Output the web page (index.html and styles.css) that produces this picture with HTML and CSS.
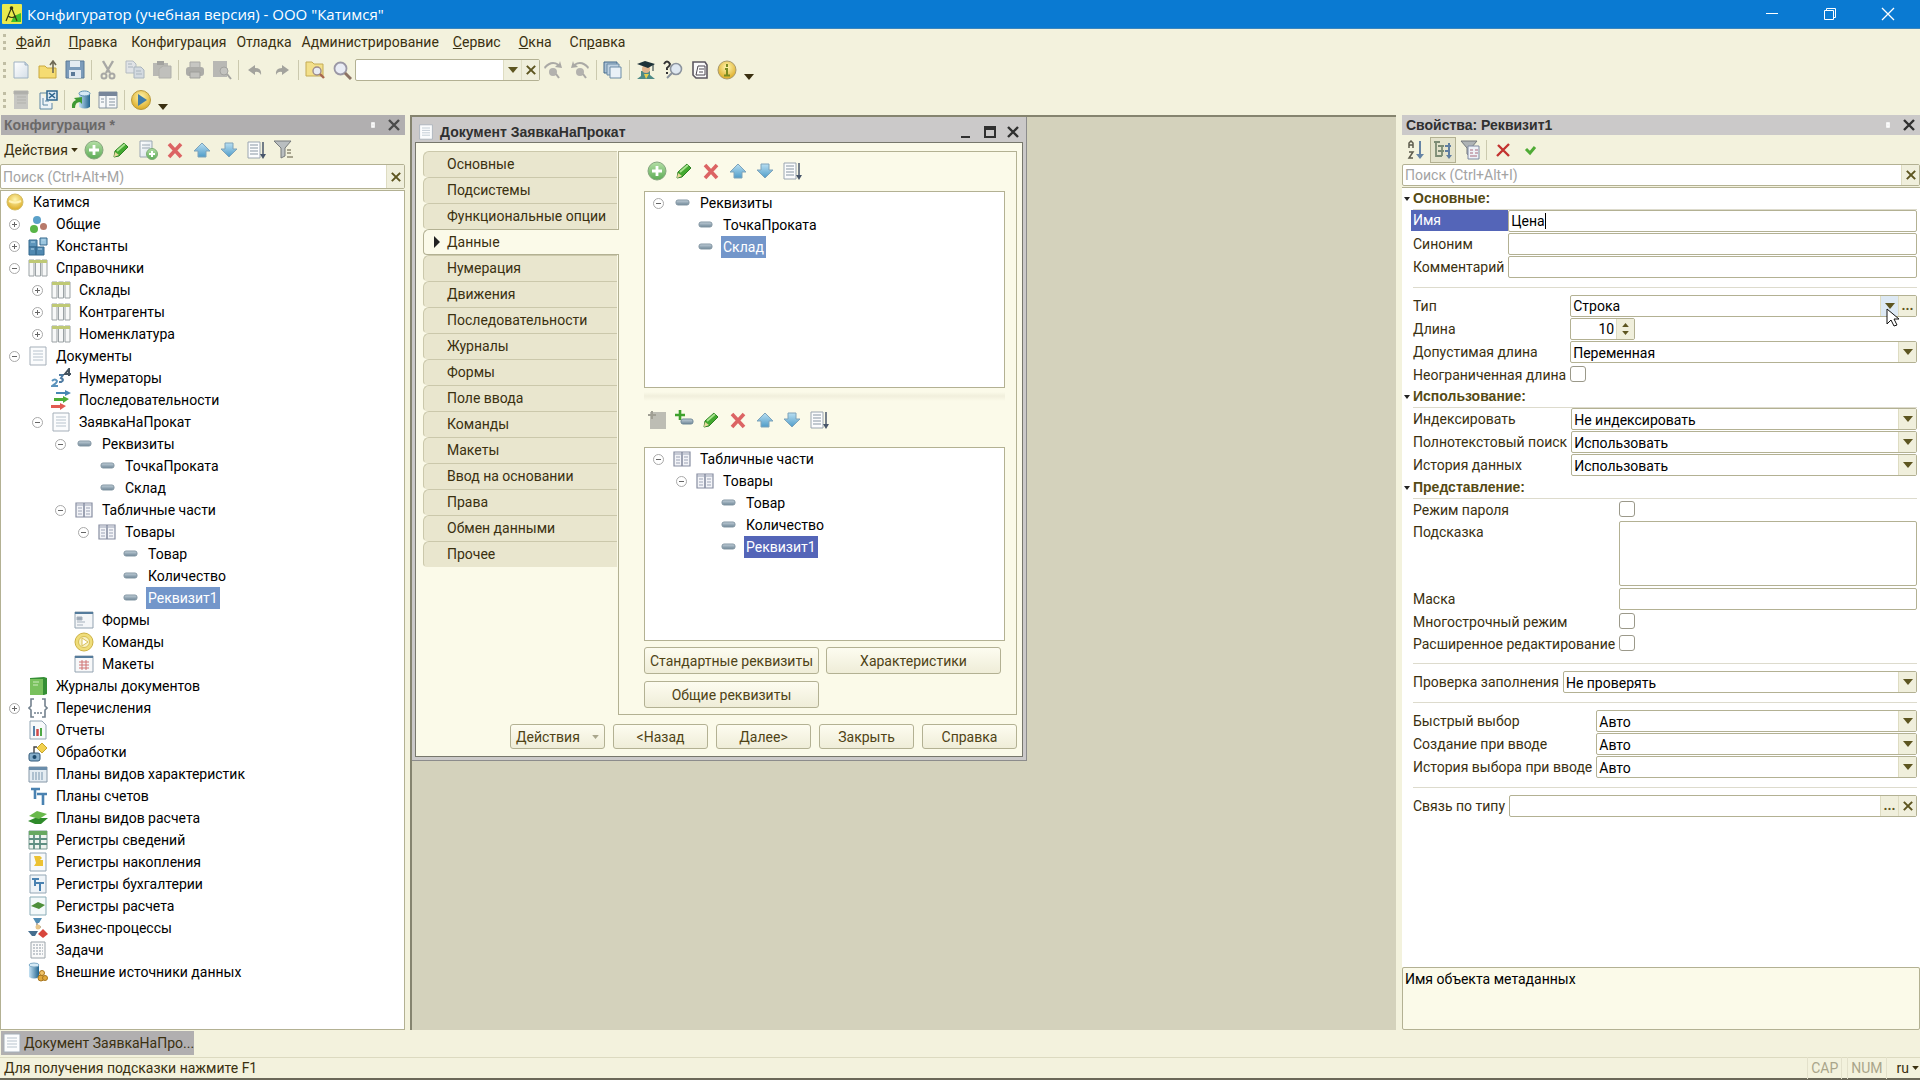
FILE: index.html
```
<!DOCTYPE html>
<html lang="ru">
<head>
    <meta charset="UTF-8">
    <meta name="viewport" content="width=device-width, initial-scale=1.0">
    <title>Конфигуратор (учебная версия) - ООО "Катимся"</title>
    <link rel="stylesheet" href="styles.css">
</head>
<body>
    <!-- Icon set -->
    <svg class="sprite" width="0" height="0" aria-hidden="true">
        <defs>
            <linearGradient id="g-blue" x1="0" y1="0" x2="0" y2="1"><stop offset="0" stop-color="#b9dff2"/><stop offset="1" stop-color="#4f9cc8"/></linearGradient>
            <linearGradient id="g-green" x1="0" y1="0" x2="0" y2="1"><stop offset="0" stop-color="#b4dfa6"/><stop offset="1" stop-color="#5cab55"/></linearGradient>
            <linearGradient id="g-paper" x1="0" y1="0" x2="1" y2="1"><stop offset="0" stop-color="#ffffff"/><stop offset="1" stop-color="#d5dfe8"/></linearGradient>
            <linearGradient id="g-bar" x1="0" y1="0" x2="0" y2="1"><stop offset="0" stop-color="#c3d0da"/><stop offset="1" stop-color="#6f8797"/></linearGradient>
            <linearGradient id="g-cyl" x1="0" y1="0" x2="1" y2="0"><stop offset="0" stop-color="#c5e2f4"/><stop offset="1" stop-color="#22648f"/></linearGradient>
            <radialGradient id="g-gold" cx=".5" cy=".35" r=".65"><stop offset="0" stop-color="#fff6b0"/><stop offset="1" stop-color="#dcaa22"/></radialGradient>
        </defs>
        <symbol id="i-app" viewBox="0 0 20 20"><rect width="20" height="20" rx="1" fill="#e9ea4d"/><path d="M12 12l7-3v9H9z" fill="#3fbf2c"/><path d="M9 5L4 17M10 5l5 12M6 12q4 3 8 0" stroke="#333a12" stroke-width="1.200" fill="none"/><circle cx="9.500" cy="4" r="1.800" fill="#333a12"/></symbol>
        <symbol id="i-new" viewBox="0 0 20 20"><path d="M3 2h11l3 3v13H3z" fill="url(#g-paper)" stroke="#9fb2c2"/><path d="M14 2v3h3" fill="#c5d3de" stroke="#9fb2c2"/></symbol>
        <symbol id="i-open" viewBox="0 0 20 20"><path d="M1 6h6l2 2h9v10H1z" fill="#f5dc72" stroke="#c9a83c"/><path d="M15 13V2M12 5l3-4 3 4" fill="none" stroke="#6e6955" stroke-width="1.600"/></symbol>
        <symbol id="i-save" viewBox="0 0 20 20"><path d="M1 1h18v17H1z" fill="#7c9cba" stroke="#5b7a98"/><path d="M5 1h10v6H5z" fill="#e4ecf2"/><path d="M4 10h12v8H4z" fill="#dfe8ef"/><path d="M6 12h4v4H6z" fill="#5b7a98"/></symbol>
        <symbol id="i-cut" viewBox="0 0 20 20"><path d="M5 1l7 12M15 1L8 13" stroke="#a8a8a5" stroke-width="2.400"/><circle cx="6" cy="16" r="2.500" fill="none" stroke="#a8a8a5" stroke-width="2"/><circle cx="14" cy="16" r="2.500" fill="none" stroke="#a8a8a5" stroke-width="2"/></symbol>
        <symbol id="i-copy" viewBox="0 0 20 20"><path d="M1 1h7l3 3v9H1z" fill="#e0e3e6" stroke="#b4bbc1"/><path d="M9 7h7l3 3v8H9z" fill="#d3dae0" stroke="#a9b4bd"/><path d="M3 4h4M3 7h5M11 11h5M11 14h6" stroke="#a9b4bd"/></symbol>
        <symbol id="i-paste" viewBox="0 0 20 20"><path d="M1 3h15v13H1z" fill="#b9b9b4"/><path d="M5 1h7v4H5z" fill="#a3a39f"/><path d="M7 9l4-3h8v12H7z" fill="#c0c0bc" stroke="#b0b0ab"/></symbol>
        <symbol id="i-print" viewBox="0 0 20 20"><path d="M5 2h10v6H5z" fill="#c6c6c2" stroke="#a8a8a4"/><rect x="1" y="7" width="18" height="9" rx="3" fill="#acaca8"/><path d="M5 12h10v6H5z" fill="#c1c1bd" stroke="#9f9f9b"/></symbol>
        <symbol id="i-preview" viewBox="0 0 20 20"><path d="M1 1h14v16H1z" fill="#b8b8b4"/><circle cx="12" cy="11" r="4" fill="#c3c3bf" stroke="#a3a39f"/><path d="M15 14l4 5" stroke="#a3a39f" stroke-width="2"/></symbol>
        <symbol id="i-undo" viewBox="0 0 20 20"><path d="M3 10l7-5v3q7 0 6 7-2-4-6-3v3z" fill="#a3a39d"/></symbol>
        <symbol id="i-redo" viewBox="0 0 20 20"><path d="M17 10l-7-5v3q-7 0-6 7 2-4 6-3v3z" fill="#a3a39d"/></symbol>
        <symbol id="i-findall" viewBox="0 0 20 20"><path d="M1 2h6l2 2h9v12H1z" fill="#f3e08a" stroke="#c4ab55"/><circle cx="12" cy="11" r="4" fill="#e8ebf2" stroke="#9d8b8b" stroke-width="1.400"/><path d="M15 14l4 4" stroke="#a8674f" stroke-width="2.400"/></symbol>
        <symbol id="i-find" viewBox="0 0 20 20"><circle cx="8.500" cy="8.500" r="6" fill="#e9ecf5" stroke="#9a97a5" stroke-width="1.800"/><path d="M13 13l6 6" stroke="#8c7264" stroke-width="3"/></symbol>
        <symbol id="i-findnext" viewBox="0 0 20 20"><path d="M1 7q7-8 15-3l1-3 2 7-7-1 2-2Q8 2 2 9z" fill="#aaa9a5"/><circle cx="10" cy="12" r="4" fill="#b3b2ae"/><path d="M13 14l3 4" stroke="#aaa9a5" stroke-width="2"/></symbol>
        <symbol id="i-findprev" viewBox="0 0 20 20"><path d="M19 7Q12-1 4 4L3 1 1 8l7-1-2-2q6-3 12 4z" fill="#aaa9a5"/><circle cx="10" cy="12" r="4" fill="#b3b2ae"/><path d="M13 14l3 4" stroke="#aaa9a5" stroke-width="2"/></symbol>
        <symbol id="i-windows" viewBox="0 0 20 20"><path d="M1 2h13v11H1z" fill="#a8bfd2" stroke="#41698b"/><path d="M4 4h12v11H4z" fill="#bfd2e2" stroke="#6b8ba6"/><path d="M7 7h11v11H7z" fill="#e9f1f7" stroke="#6b8ba6"/></symbol>
        <symbol id="i-student" viewBox="0 0 20 20"><path d="M5 11h9v4l5 4H1l4-3z" fill="#4e8a86"/><circle cx="10" cy="9" r="4" fill="#e2b58d"/><path d="M1 4l8-3 10 3-7 4z" fill="#1d3238"/><path d="M17 4v7" stroke="#1d3238"/><path d="M8 14l2 5 3-5z" fill="#e8cf4c"/></symbol>
        <symbol id="i-helpfind" viewBox="0 0 20 20"><path d="M1 4q3-5 6 0 0 2-3 4v2M4 12v2" fill="none" stroke="#333" stroke-width="2"/><circle cx="13" cy="9" r="5.500" fill="#dfe8f1" stroke="#8c949e" stroke-width="1.600"/><path d="M9 13l-5 5" stroke="#8c949e" stroke-width="2"/></symbol>
        <symbol id="i-book" viewBox="0 0 20 20"><path d="M3 2h12l2 3v13H6l-3-3z" fill="#fafafa" stroke="#5c5760" stroke-width="1.600"/><path d="M8 6h7v9H6z" fill="#fff" stroke="#4c4750"/><path d="M9 9h5M9 12h4" stroke="#4c4750"/></symbol>
        <symbol id="i-info" viewBox="0 0 20 20"><circle cx="10" cy="10" r="9" fill="url(#g-gold)" stroke="#a99a6a"/><path d="M10 4v3M8 9h2v6M7 15.500h6" stroke="#7a8a20" stroke-width="2" fill="none"/></symbol>
        <symbol id="i-list" viewBox="0 0 20 20"><path d="M3 1h14v18H3z" fill="#c6c6c2"/><path d="M3 1h14v3H3zM6 7h9M6 10h9M6 13h9" stroke="#b2b2ad" fill="#afafab"/></symbol>
        <symbol id="i-closeconf" viewBox="0 0 20 20"><path d="M2 3h7M2 3v16h12v-6" fill="#eef3f6" stroke="#5d86a3"/><path d="M9 1h10v9H9z" fill="#ddebf4" stroke="#2c648d" stroke-width="1.500"/><path d="M11 3l6 5M17 3l-6 5" stroke="#2c648d" stroke-width="1.600"/><path d="M5 8v7h5M7 11h4" stroke="#5d86a3" fill="none"/></symbol>
        <symbol id="i-dbupdate" viewBox="0 0 20 20"><path d="M8 3v14q6 3 11 0V3z" fill="url(#g-cyl)"/><ellipse cx="13.500" cy="3.500" rx="5.500" ry="2.500" fill="#d5e9f5" stroke="#5c91b4"/><path d="M1 18Q0 12 5 10L3 8l8-1v7l-2-2q-5 0-5 6z" fill="#3f9a34"/></symbol>
        <symbol id="i-table" viewBox="0 0 20 20"><path d="M1 2h18v16H1z" fill="#f6f8f9" stroke="#8593a0"/><path d="M1 2h18v4H1z" fill="#77869a"/><path d="M8 6v12M11 9h6M11 12h6M11 15h6M3 9h3M3 12h3" stroke="#8593a0"/></symbol>
        <symbol id="i-run" viewBox="0 0 20 20"><circle cx="10" cy="10" r="9.500" fill="url(#g-gold)" stroke="#b99a3d"/><path d="M7 4l9 6-9 6z" fill="#3f7ca9"/></symbol>
        <symbol id="i-add" viewBox="0 0 20 20"><circle cx="10" cy="10" r="9" fill="url(#g-green)" stroke="#86a57e"/><path d="M10 5v10M5 10h10" stroke="#fff" stroke-width="2.800"/></symbol>
        <symbol id="i-edit" viewBox="0 0 20 20"><path d="M4 11l9-8 4 4-9 9-5 1z" fill="#43a930" stroke="#2d7f24"/><path d="M6 11l8-7" stroke="#a8e38e" stroke-width="1.800"/><path d="M3 17l1-5 4 3z" fill="#ecd7a0"/></symbol>
        <symbol id="i-addcopy" viewBox="0 0 20 20"><path d="M2 1h12v16H2z" fill="url(#g-paper)" stroke="#9aa7b2"/><path d="M4 5h8M4 8h8" stroke="#9aa7b2"/><circle cx="14" cy="14" r="5.500" fill="url(#g-green)" stroke="#7fae77"/><path d="M14 11v6M11 14h6" stroke="#fff" stroke-width="2"/></symbol>
        <symbol id="i-del" viewBox="0 0 20 20"><path d="M4 4l12 13M16 4L4 17" stroke="#dc6464" stroke-width="3.600"/></symbol>
        <symbol id="i-up" viewBox="0 0 20 20"><path d="M10 3l8 8h-4v6H6v-6H2z" fill="url(#g-blue)" stroke="#7ea3ba"/></symbol>
        <symbol id="i-down" viewBox="0 0 20 20"><path d="M10 17l8-8h-4V3H6v6H2z" fill="url(#g-blue)" stroke="#7ea3ba"/></symbol>
        <symbol id="i-sort" viewBox="0 0 20 20"><path d="M2 2h12v16H2z" fill="#fbfcfd" stroke="#9aa5b0"/><path d="M4 5h8M4 8h8M4 11h8M4 14h8" stroke="#8795a2"/><path d="M17 2v14" stroke="#48566a" stroke-width="1.500"/><path d="M14 14h6l-3 5z" fill="#48566a"/></symbol>
        <symbol id="i-filter" viewBox="0 0 20 20"><path d="M1 1h17l-6 7v8l-4 2V8z" fill="#b9bec0" stroke="#767b7d"/><path d="M14 10h4M14 13h4M14 17h6" stroke="#8f8a74" stroke-width="1.500"/></symbol>
        <symbol id="i-addtab" viewBox="0 0 20 20"><path d="M3 2h16v17H3z" fill="#bdbdb4"/><path d="M5 1v8M1 5h8" stroke="#a09f94" stroke-width="2"/></symbol>
        <symbol id="i-addattr" viewBox="0 0 20 20"><path d="M6 0v10M1 5h10" stroke="#3ea12c" stroke-width="2.600"/><rect x="7" y="9" width="12" height="5" rx="2" fill="url(#g-bar)" stroke="#718998"/></symbol>

        <symbol id="i-root" viewBox="0 0 20 20"><circle cx="10" cy="10" r="8" fill="url(#g-gold)" stroke="#d3bd66"/><path d="M4 9q6 3 12 0" stroke="#fff3b5" stroke-width="2" fill="none"/></symbol>
        <symbol id="i-common" viewBox="0 0 20 20"><circle cx="9" cy="6" r="4" fill="#5ba1c9"/><circle cx="6" cy="15" r="4" fill="#59b547"/><circle cx="15.500" cy="12.500" r="3.500" fill="#b87a6a"/></symbol>
        <symbol id="i-const" viewBox="0 0 20 20"><path d="M1 4h8v7H1z" fill="#5d95bb" stroke="#34688d"/><path d="M12 2h7v7h-7z" fill="#9cc6df" stroke="#34688d"/><path d="M1 11h7v8H1zM8 11h8v8H8z" fill="#5089b1" stroke="#34688d"/><path d="M3 13h3M10 13h4M3 6h4M14 4h3" stroke="#b5d7ea"/></symbol>
        <symbol id="i-catalog" viewBox="0 0 20 20"><path d="M1 2h5v16H1zM7.500 2h5v16h-5zM14 2h5v16h-5z" fill="#f7f8f8" stroke="#9ba2a5"/><path d="M1 2h18v3H1z" fill="#bfc975"/></symbol>
        <symbol id="i-doc" viewBox="0 0 20 20"><path d="M2 1h16v18H2z" fill="#fbfcfd" stroke="#a5afb9"/><path d="M5 5h10M5 8h10M5 11h10M5 14h10" stroke="#b8c3cd"/></symbol>
        <symbol id="i-numer" viewBox="0 0 20 20"><path d="M1 13q3-3 5 0 0 2-5 5h6" fill="none" stroke="#5b93bd" stroke-width="2"/><path d="M8 7h4l-2 3q4 2 0 4l-2 0" fill="none" stroke="#4f7ba2" stroke-width="2"/><path d="M18 8V1l-4 5h6" fill="none" stroke="#44525e" stroke-width="2"/></symbol>
        <symbol id="i-seq" viewBox="0 0 20 20"><path d="M5 2h9V0l6 3-6 3V4H5z" fill="#4787b3"/><path d="M3 8h9V6l6 3-6 4v-2H3z" fill="#4cad37"/><path d="M0 15h9v-2l6 3-6 4v-2H0z" fill="#e25b52"/></symbol>
        <symbol id="i-attr" viewBox="0 0 20 20"><rect x="4" y="7" width="13" height="5" rx="2" fill="url(#g-bar)" stroke="#8497a4"/></symbol>
        <symbol id="i-tabpart" viewBox="0 0 20 20"><path d="M2 3h16v14H2z" fill="#f3f4f8" stroke="#878ea1" stroke-width="1.200"/><path d="M10 3v14" stroke="#878ea1" stroke-width="1.600"/><path d="M2 5h16M4 8h4M4 11h4M4 14h4M12 8h4M12 11h4M12 14h4" stroke="#9ca3b5"/></symbol>
        <symbol id="i-form" viewBox="0 0 20 20"><path d="M1 2h18v16H1z" fill="#f4f6f8" stroke="#93a3b1"/><path d="M1 2h18v2H1z" fill="#557c9c"/><path d="M3 7h5v3H3zM3 12h8M3 15h6" fill="#9aa7b5" stroke="#a5b0bc"/></symbol>
        <symbol id="i-command" viewBox="0 0 20 20"><circle cx="10" cy="10" r="9" fill="#efdd7a" stroke="#cdb142"/><circle cx="10" cy="10" r="5.500" fill="#f8f1c4" stroke="#d7be55"/><path d="M8 6l6 4-6 4z" fill="#fff" stroke="#d7be55"/></symbol>
        <symbol id="i-template" viewBox="0 0 20 20"><path d="M1 2h18v16H1z" fill="#f7f8f9" stroke="#93a3b1"/><path d="M1 2h18v2H1z" fill="#557c9c"/><path d="M5 8h10M5 11h10M5 14h10M8 6v10M12 6v10" stroke="#cf7575"/></symbol>
        <symbol id="i-journal" viewBox="0 0 20 20"><path d="M2 2l14-1 3 1v16l-3 1H2z" fill="#358f35"/><path d="M2 3h13v16H2z" fill="#79c15d"/><path d="M5 6h6M5 9h5" stroke="#cdebbd"/></symbol>
        <symbol id="i-enum" viewBox="0 0 20 20"><path d="M6 1H3v7l-2 2 2 2v7h3M14 1h3v7l2 2-2 2v7h-3" fill="none" stroke="#73818e" stroke-width="1.600"/><path d="M6 15h2M9 15h2M12 15h2" stroke="#73818e" stroke-width="1.600"/></symbol>
        <symbol id="i-report" viewBox="0 0 20 20"><path d="M2 1h12l4 4v14H2z" fill="#f7f9fa" stroke="#93a6b4"/><path d="M6 6v10" stroke="#5782a8" stroke-width="2"/><path d="M9.500 9v7" stroke="#d24a4a" stroke-width="2.500"/><path d="M13 8v8" stroke="#4ea945" stroke-width="2"/></symbol>
        <symbol id="i-process" viewBox="0 0 20 20"><path d="M14 1l5 5-5 5-5-5z" fill="#f2d14f" stroke="#c7a52c"/><path d="M6 11V5h3" stroke="#444" fill="none" stroke-width="1.400"/><rect x="1" y="11" width="11" height="8" rx="2" fill="#86aecb" stroke="#345b7a"/><circle cx="6.500" cy="15" r="2" fill="#1d4a6c"/></symbol>
        <symbol id="i-chars" viewBox="0 0 20 20"><path d="M1 3h18v15H1z" fill="#e4ecf2" stroke="#8698a8"/><path d="M1 3h18v3H1z" fill="#6a8dab"/><path d="M5 8v8M8 8v8M11 8v8M14 8v8" stroke="#7895ad"/></symbol>
        <symbol id="i-accounts" viewBox="0 0 20 20"><path d="M3 3h9M7 3v10M9 8h10M15 8v11" stroke="#4a82b1" stroke-width="2.600" fill="none"/></symbol>
        <symbol id="i-calc" viewBox="0 0 20 20"><path d="M0 13l7-3h13l-7 6H7z" fill="#2e8a2a"/><path d="M1 8l8-5 10 3-8 5z" fill="#69b94b"/></symbol>
        <symbol id="i-reginfo" viewBox="0 0 20 20"><path d="M1 1h18v18H1z" fill="#eef4ef" stroke="#7a9a93"/><path d="M1 1h18v4H1z" fill="#67a860"/><path d="M1 9h18M1 14h18M6 5v14M12 5v14" stroke="#5e8f82" stroke-width="1.800"/></symbol>
        <symbol id="i-regacc" viewBox="0 0 20 20"><path d="M2 1h16v18H2z" fill="#f7f9fb" stroke="#93a6b4"/><path d="M6 4h6l2 2-2 2h3v6H6l2-3z" fill="#ecc233"/></symbol>
        <symbol id="i-regbuh" viewBox="0 0 20 20"><path d="M2 1h16v18H2z" fill="#eff4f8" stroke="#93a6b4"/><path d="M4 5h7M7 5v7M8 9h8M12 9v8" stroke="#4a82b1" stroke-width="2" fill="none"/></symbol>
        <symbol id="i-regcalc" viewBox="0 0 20 20"><path d="M2 1h16v18H2z" fill="#f4f9fa" stroke="#8badb8"/><path d="M3 10l7-4 7 3-6 4z" fill="#4e8f3b"/></symbol>
        <symbol id="i-bp" viewBox="0 0 20 20"><path d="M5 0h9l-3 5H8z" fill="#528db4"/><path d="M9 5v4h4" stroke="#555" fill="none"/><circle cx="10" cy="9" r="2.500" fill="#e8c68a"/><path d="M0 13h10l-3 5H4z" fill="#456e8f"/><path d="M15 11l5 5-5 4-5-4z" fill="#d8463c"/></symbol>
        <symbol id="i-task" viewBox="0 0 20 20"><path d="M3 2h14v16H3z" fill="#fafafa" stroke="#9ca4ab"/><path d="M5 5h10M5 8h10M5 11h10M5 14h10" stroke="#8f99a4" stroke-dasharray="2 1"/></symbol>
        <symbol id="i-ext" viewBox="0 0 20 20"><path d="M1 3v12q5 3 10 0V3z" fill="url(#g-cyl)"/><ellipse cx="6" cy="3" rx="5" ry="2" fill="#d5e9f5" stroke="#7faac6"/><circle cx="13" cy="16" r="3" fill="#e0a83c" stroke="#a8751c"/><circle cx="17" cy="16" r="2.500" fill="#e0a83c" stroke="#a8751c"/><circle cx="14" cy="11" r="2.500" fill="#f0c36a" stroke="#a8751c"/></symbol>

        <symbol id="i-az" viewBox="0 0 20 20"><path d="M3 8V3l2-2 2 2v5M3 5h4M3 12h4l-4 6h4" fill="none" stroke="#5e5c4d" stroke-width="1.500"/><path d="M14 1v14" stroke="#6684a5" stroke-width="2"/><path d="M10 14h8l-4 5z" fill="#6684a5"/></symbol>
        <symbol id="i-cat" viewBox="0 0 20 20"><path d="M1 2h6M3 2v14h6M5 6h6M5 11h6M9 6v10" fill="none" stroke="#7b8b74" stroke-width="1.800"/><path d="M12 6h6M12 11h5M16 3v13" stroke="#5f7da0" stroke-width="2"/><path d="M13 15h6l-3 4z" fill="#5f7da0"/></symbol>
        <symbol id="i-propfilter" viewBox="0 0 20 20"><path d="M1 1h16l-6 7v9l-4-3V8z" fill="#aeb3b5" stroke="#74797b"/><path d="M8 6h11v13H8z" fill="#eef1f7" stroke="#7e89a0"/><path d="M10 10h3M15 10h3M10 13h3M15 13h3M10 16h7" stroke="#a8697a"/></symbol>
        <symbol id="i-cancel" viewBox="0 0 20 20"><path d="M5 5l11 11M16 4L4 16" stroke="#c23330" stroke-width="2.400"/></symbol>
        <symbol id="i-ok" viewBox="0 0 20 20"><path d="M6 9l4 4 5-6" stroke="#4fab35" stroke-width="3" fill="none"/></symbol>
        <symbol id="i-x" viewBox="0 0 12 12"><path d="M1 1l10 10M11 1L1 11" stroke="currentColor" stroke-width="2.400"/></symbol>
        <symbol id="i-tri" viewBox="0 0 10 6"><path d="M0 0h10L5 6z" fill="currentColor"/></symbol>
        <symbol id="i-pin" viewBox="0 0 6 8"><path d="M2 2h2v4H2z" fill="none" stroke="#fff" stroke-width="1.600"/></symbol>
    </svg>

    <header class="titlebar">
        <svg class="icon"><use href="#i-app"/></svg>
        <h1>Конфигуратор (учебная версия) - ООО "Катимся"</h1>
        <div class="window-controls">
            <button aria-label="Свернуть"><svg width="14" height="14"><path d="M1 6.500h12" stroke="#fff"/></svg></button>
            <button aria-label="Восстановить"><svg width="14" height="14"><path d="M1.500 3.500h9v9h-9zM3.500 3V1.500h9v9H11" fill="none" stroke="#fff"/></svg></button>
            <button aria-label="Закрыть"><svg width="14" height="14"><path d="M1 1l12 12M13 1L1 13" stroke="#fff" stroke-width="1.300"/></svg></button>
        </div>
    </header>

    <nav class="menubar">
        <span class="grip"></span>
        <a class="menu-item hot" href="#"><u>Ф</u>айл</a>
        <a class="menu-item hot" href="#"><u>П</u>равка</a>
        <a class="menu-item" href="#">Конфигурация</a>
        <a class="menu-item" href="#">Отладка</a>
        <a class="menu-item" href="#">Администрирование</a>
        <a class="menu-item hot" href="#"><u>С</u>ервис</a>
        <a class="menu-item hot" href="#"><u>О</u>кна</a>
        <a class="menu-item hot" href="#">Сп<u>р</u>авка</a>
    </nav>

    <div class="toolbar main-toolbar">
        <span class="grip"></span>
        <button aria-label="Новый"><svg class="icon"><use href="#i-new"/></svg></button>
        <button aria-label="Открыть"><svg class="icon"><use href="#i-open"/></svg></button>
        <button aria-label="Сохранить"><svg class="icon"><use href="#i-save"/></svg></button>
        <span class="sep"></span>
        <button aria-label="Вырезать"><svg class="icon"><use href="#i-cut"/></svg></button>
        <button aria-label="Копировать"><svg class="icon"><use href="#i-copy"/></svg></button>
        <button aria-label="Вставить"><svg class="icon"><use href="#i-paste"/></svg></button>
        <span class="sep"></span>
        <button aria-label="Печать"><svg class="icon"><use href="#i-print"/></svg></button>
        <button aria-label="Просмотр"><svg class="icon"><use href="#i-preview"/></svg></button>
        <span class="sep"></span>
        <button aria-label="Отменить"><svg class="icon"><use href="#i-undo"/></svg></button>
        <button aria-label="Повторить"><svg class="icon"><use href="#i-redo"/></svg></button>
        <span class="sep"></span>
        <button aria-label="Глобальный поиск"><svg class="icon"><use href="#i-findall"/></svg></button>
        <button aria-label="Найти"><svg class="icon"><use href="#i-find"/></svg></button>
        <div class="field find-box">
            <input type="text" aria-label="Строка поиска">
            <button class="drop" aria-label="Список"><svg class="tri"><use href="#i-tri"/></svg></button>
            <button class="drop" aria-label="Очистить"><svg class="x"><use href="#i-x"/></svg></button>
        </div>
        <button aria-label="Найти далее"><svg class="icon"><use href="#i-findnext"/></svg></button>
        <button aria-label="Найти ранее"><svg class="icon"><use href="#i-findprev"/></svg></button>
        <span class="sep"></span>
        <button aria-label="Окна"><svg class="icon"><use href="#i-windows"/></svg></button>
        <span class="sep"></span>
        <button aria-label="Синтакс-помощник"><svg class="icon"><use href="#i-student"/></svg></button>
        <button aria-label="Поиск в справке"><svg class="icon"><use href="#i-helpfind"/></svg></button>
        <button aria-label="Содержание"><svg class="icon"><use href="#i-book"/></svg></button>
        <button aria-label="О программе"><svg class="icon"><use href="#i-info"/></svg></button>
        <button class="more" aria-label="Ещё"><svg class="tri"><use href="#i-tri"/></svg></button>
    </div>

    <div class="toolbar main-toolbar">
        <span class="grip"></span>
        <button aria-label="Открыть конфигурацию"><svg class="icon"><use href="#i-list"/></svg></button>
        <button aria-label="Закрыть конфигурацию"><svg class="icon"><use href="#i-closeconf"/></svg></button>
        <span class="sep"></span>
        <button aria-label="Обновить базу данных"><svg class="icon"><use href="#i-dbupdate"/></svg></button>
        <button aria-label="Окно конфигурации"><svg class="icon"><use href="#i-table"/></svg></button>
        <span class="sep"></span>
        <button aria-label="Отладка"><svg class="icon"><use href="#i-run"/></svg></button>
        <button class="more" aria-label="Ещё"><svg class="tri"><use href="#i-tri"/></svg></button>
    </div>

    <main class="workspace">
        <!-- Configuration tree -->
        <section class="panel">
            <div class="panel-title inactive">
                <h2>Конфигурация *</h2>
                <svg class="pin"><use href="#i-pin"/></svg>
                <button aria-label="Закрыть"><svg class="x"><use href="#i-x"/></svg></button>
            </div>
            <div class="toolbar tree-toolbar">
                <button class="actions">Действия <svg class="tri small"><use href="#i-tri"/></svg></button>
                <button aria-label="Добавить"><svg class="icon"><use href="#i-add"/></svg></button>
                <button aria-label="Изменить"><svg class="icon"><use href="#i-edit"/></svg></button>
                <button aria-label="Добавить копированием"><svg class="icon"><use href="#i-addcopy"/></svg></button>
                <button aria-label="Удалить"><svg class="icon"><use href="#i-del"/></svg></button>
                <button aria-label="Вверх"><svg class="icon"><use href="#i-up"/></svg></button>
                <button aria-label="Вниз"><svg class="icon"><use href="#i-down"/></svg></button>
                <button aria-label="Упорядочить"><svg class="icon"><use href="#i-sort"/></svg></button>
                <button aria-label="Отбор"><svg class="icon"><use href="#i-filter"/></svg></button>
            </div>
            <div class="field search">
                <input type="text" placeholder="Поиск (Ctrl+Alt+M)" aria-label="Поиск">
                <button class="drop" aria-label="Очистить"><svg class="x"><use href="#i-x"/></svg></button>
            </div>
            <ul class="tree main-tree">
                <li class="l0"><svg class="icon"><use href="#i-root"/></svg><span>Катимся</span></li>
                <li class="l1"><button class="exp plus" aria-label="Развернуть"></button><svg class="icon"><use href="#i-common"/></svg><span>Общие</span></li>
                <li class="l1"><button class="exp plus" aria-label="Развернуть"></button><svg class="icon"><use href="#i-const"/></svg><span>Константы</span></li>
                <li class="l1"><button class="exp" aria-label="Свернуть"></button><svg class="icon"><use href="#i-catalog"/></svg><span>Справочники</span></li>
                <li class="l2"><button class="exp plus" aria-label="Развернуть"></button><svg class="icon"><use href="#i-catalog"/></svg><span>Склады</span></li>
                <li class="l2"><button class="exp plus" aria-label="Развернуть"></button><svg class="icon"><use href="#i-catalog"/></svg><span>Контрагенты</span></li>
                <li class="l2"><button class="exp plus" aria-label="Развернуть"></button><svg class="icon"><use href="#i-catalog"/></svg><span>Номенклатура</span></li>
                <li class="l1"><button class="exp" aria-label="Свернуть"></button><svg class="icon"><use href="#i-doc"/></svg><span>Документы</span></li>
                <li class="l2 leaf"><svg class="icon"><use href="#i-numer"/></svg><span>Нумераторы</span></li>
                <li class="l2 leaf"><svg class="icon"><use href="#i-seq"/></svg><span>Последовательности</span></li>
                <li class="l2"><button class="exp" aria-label="Свернуть"></button><svg class="icon"><use href="#i-doc"/></svg><span>ЗаявкаНаПрокат</span></li>
                <li class="l3"><button class="exp" aria-label="Свернуть"></button><svg class="icon"><use href="#i-attr"/></svg><span>Реквизиты</span></li>
                <li class="l4 leaf"><svg class="icon"><use href="#i-attr"/></svg><span>ТочкаПроката</span></li>
                <li class="l4 leaf"><svg class="icon"><use href="#i-attr"/></svg><span>Склад</span></li>
                <li class="l3"><button class="exp" aria-label="Свернуть"></button><svg class="icon"><use href="#i-tabpart"/></svg><span>Табличные части</span></li>
                <li class="l4"><button class="exp" aria-label="Свернуть"></button><svg class="icon"><use href="#i-tabpart"/></svg><span>Товары</span></li>
                <li class="l5 leaf"><svg class="icon"><use href="#i-attr"/></svg><span>Товар</span></li>
                <li class="l5 leaf"><svg class="icon"><use href="#i-attr"/></svg><span>Количество</span></li>
                <li class="l5 leaf"><svg class="icon"><use href="#i-attr"/></svg><span class="selected">Реквизит1</span></li>
                <li class="l3 leaf"><svg class="icon"><use href="#i-form"/></svg><span>Формы</span></li>
                <li class="l3 leaf"><svg class="icon"><use href="#i-command"/></svg><span>Команды</span></li>
                <li class="l3 leaf"><svg class="icon"><use href="#i-template"/></svg><span>Макеты</span></li>
                <li class="l1 leaf"><svg class="icon"><use href="#i-journal"/></svg><span>Журналы документов</span></li>
                <li class="l1"><button class="exp plus" aria-label="Развернуть"></button><svg class="icon"><use href="#i-enum"/></svg><span>Перечисления</span></li>
                <li class="l1 leaf"><svg class="icon"><use href="#i-report"/></svg><span>Отчеты</span></li>
                <li class="l1 leaf"><svg class="icon"><use href="#i-process"/></svg><span>Обработки</span></li>
                <li class="l1 leaf"><svg class="icon"><use href="#i-chars"/></svg><span>Планы видов характеристик</span></li>
                <li class="l1 leaf"><svg class="icon"><use href="#i-accounts"/></svg><span>Планы счетов</span></li>
                <li class="l1 leaf"><svg class="icon"><use href="#i-calc"/></svg><span>Планы видов расчета</span></li>
                <li class="l1 leaf"><svg class="icon"><use href="#i-reginfo"/></svg><span>Регистры сведений</span></li>
                <li class="l1 leaf"><svg class="icon"><use href="#i-regacc"/></svg><span>Регистры накопления</span></li>
                <li class="l1 leaf"><svg class="icon"><use href="#i-regbuh"/></svg><span>Регистры бухгалтерии</span></li>
                <li class="l1 leaf"><svg class="icon"><use href="#i-regcalc"/></svg><span>Регистры расчета</span></li>
                <li class="l1 leaf"><svg class="icon"><use href="#i-bp"/></svg><span>Бизнес-процессы</span></li>
                <li class="l1 leaf"><svg class="icon"><use href="#i-task"/></svg><span>Задачи</span></li>
                <li class="l1 leaf"><svg class="icon"><use href="#i-ext"/></svg><span>Внешние источники данных</span></li>
            </ul>
        </section>

        <!-- Document editor window -->
        <section class="desktop">
            <div class="window">
                <div class="window-title">
                    <svg class="icon"><use href="#i-doc"/></svg>
                    <h2>Документ ЗаявкаНаПрокат</h2>
                    <button aria-label="Свернуть"><svg width="14" height="14"><path d="M2 12h9" stroke="currentColor" stroke-width="2"/></svg></button>
                    <button aria-label="Развернуть"><svg width="14" height="14"><path d="M1 1h12v4H1z" fill="currentColor"/><path d="M2 2h10v10H2z" fill="none" stroke="currentColor" stroke-width="2"/></svg></button>
                    <button aria-label="Закрыть"><svg class="x"><use href="#i-x"/></svg></button>
                </div>
                <div class="window-body">
                    <div class="editor">
                        <div class="tabs">
                            <button>Основные</button>
                            <button>Подсистемы</button>
                            <button>Функциональные опции</button>
                            <button class="active">Данные</button>
                            <button>Нумерация</button>
                            <button>Движения</button>
                            <button>Последовательности</button>
                            <button>Журналы</button>
                            <button>Формы</button>
                            <button>Поле ввода</button>
                            <button>Команды</button>
                            <button>Макеты</button>
                            <button>Ввод на основании</button>
                            <button>Права</button>
                            <button>Обмен данными</button>
                            <button>Прочее</button>
                        </div>
                        <div class="page">
                            <div class="toolbar page-toolbar">
                                <button aria-label="Добавить"><svg class="icon"><use href="#i-add"/></svg></button>
                                <button aria-label="Изменить"><svg class="icon"><use href="#i-edit"/></svg></button>
                                <button aria-label="Удалить"><svg class="icon"><use href="#i-del"/></svg></button>
                                <button aria-label="Вверх"><svg class="icon"><use href="#i-up"/></svg></button>
                                <button aria-label="Вниз"><svg class="icon"><use href="#i-down"/></svg></button>
                                <button aria-label="Упорядочить"><svg class="icon"><use href="#i-sort"/></svg></button>
                            </div>
                            <ul class="tree list attrs">
                                <li class="l1"><button class="exp" aria-label="Свернуть"></button><svg class="icon"><use href="#i-attr"/></svg><span>Реквизиты</span></li>
                                <li class="l2 leaf"><svg class="icon"><use href="#i-attr"/></svg><span>ТочкаПроката</span></li>
                                <li class="l2 leaf"><svg class="icon"><use href="#i-attr"/></svg><span class="selected">Склад</span></li>
                            </ul>
                            <div class="splitter"></div>
                            <div class="toolbar page-toolbar second">
                                <button aria-label="Добавить табличную часть"><svg class="icon"><use href="#i-addtab"/></svg></button>
                                <button aria-label="Добавить реквизит"><svg class="icon"><use href="#i-addattr"/></svg></button>
                                <button aria-label="Изменить"><svg class="icon"><use href="#i-edit"/></svg></button>
                                <button aria-label="Удалить"><svg class="icon"><use href="#i-del"/></svg></button>
                                <button aria-label="Вверх"><svg class="icon"><use href="#i-up"/></svg></button>
                                <button aria-label="Вниз"><svg class="icon"><use href="#i-down"/></svg></button>
                                <button aria-label="Упорядочить"><svg class="icon"><use href="#i-sort"/></svg></button>
                            </div>
                            <ul class="tree list parts">
                                <li class="l1"><button class="exp" aria-label="Свернуть"></button><svg class="icon"><use href="#i-tabpart"/></svg><span>Табличные части</span></li>
                                <li class="l2"><button class="exp" aria-label="Свернуть"></button><svg class="icon"><use href="#i-tabpart"/></svg><span>Товары</span></li>
                                <li class="l3 leaf"><svg class="icon"><use href="#i-attr"/></svg><span>Товар</span></li>
                                <li class="l3 leaf"><svg class="icon"><use href="#i-attr"/></svg><span>Количество</span></li>
                                <li class="l3 leaf"><svg class="icon"><use href="#i-attr"/></svg><span class="selected focus">Реквизит1</span></li>
                            </ul>
                            <div class="page-buttons">
                                <button class="btn">Стандартные реквизиты</button>
                                <button class="btn">Характеристики</button>
                                <button class="btn">Общие реквизиты</button>
                            </div>
                        </div>
                    </div>
                    <div class="window-buttons">
                        <button class="btn with-menu">Действия <svg class="tri small"><use href="#i-tri"/></svg></button>
                        <button class="btn">&lt;Назад</button>
                        <button class="btn">Далее&gt;</button>
                        <button class="btn">Закрыть</button>
                        <button class="btn">Справка</button>
                    </div>
                </div>
            </div>
        </section>

        <!-- Properties -->
        <section class="panel">
            <div class="panel-title">
                <h2>Свойства: Реквизит1</h2>
                <svg class="pin"><use href="#i-pin"/></svg>
                <button aria-label="Закрыть"><svg class="x"><use href="#i-x"/></svg></button>
            </div>
            <div class="toolbar prop-toolbar">
                <button aria-label="По алфавиту"><svg class="icon"><use href="#i-az"/></svg></button>
                <button class="pressed" aria-label="По категориям"><svg class="icon"><use href="#i-cat"/></svg></button>
                <button aria-label="Только важные"><svg class="icon"><use href="#i-propfilter"/></svg></button>
                <span class="sep"></span>
                <button aria-label="Отменить"><svg class="icon"><use href="#i-cancel"/></svg></button>
                <button aria-label="Применить"><svg class="icon"><use href="#i-ok"/></svg></button>
            </div>
            <div class="field search prop-search">
                <input type="text" placeholder="Поиск (Ctrl+Alt+I)" aria-label="Поиск свойства">
                <button class="drop" aria-label="Очистить"><svg class="x"><use href="#i-x"/></svg></button>
            </div>
            <form class="props" onsubmit="return false;">
                <h3>Основные:</h3>
                <div class="group">
                    <label class="current" for="p-name">Имя</label>
                    <div class="field editing"><input id="p-name" type="text" value="Цена"><span class="caret"></span></div>
                    <label for="p-syn">Синоним</label>
                    <div class="field"><input id="p-syn" type="text"></div>
                    <label for="p-comment">Комментарий</label>
                    <div class="field"><input id="p-comment" type="text"></div>
                </div>
                <hr>
                <div class="group">
                    <label for="p-type">Тип</label>
                    <div class="field">
                        <input id="p-type" type="text" value="Строка">
                        <button class="drop hover" aria-label="Список">
                            <svg class="tri"><use href="#i-tri"/></svg>
                            <svg class="cursor" width="14" height="20" viewBox="0 0 14 20"><path d="M1 1v15l4-4 3 6 3-1-3-6h5z" fill="#fff" stroke="#111"/></svg>
                        </button>
                        <button class="drop dots" aria-label="Выбрать">...</button>
                    </div>
                    <label for="p-len">Длина</label>
                    <div class="field number">
                        <input id="p-len" type="text" value="10">
                        <button class="drop spin" aria-label="Изменить"><svg class="tri small up"><use href="#i-tri"/></svg><svg class="tri small"><use href="#i-tri"/></svg></button>
                    </div>
                    <label for="p-allow">Допустимая длина</label>
                    <div class="field"><select id="p-allow"><option>Переменная</option></select><span class="drop"><svg class="tri"><use href="#i-tri"/></svg></span></div>
                    <label class="check-label" for="p-unlim">Неограниченная длина</label>
                    <input id="p-unlim" type="checkbox">
                </div>
                <h3>Использование:</h3>
                <div class="group">
                    <label for="p-index">Индексировать</label>
                    <div class="field"><select id="p-index"><option>Не индексировать</option></select><span class="drop"><svg class="tri"><use href="#i-tri"/></svg></span></div>
                    <label for="p-full">Полнотекстовый поиск</label>
                    <div class="field"><select id="p-full"><option>Использовать</option></select><span class="drop"><svg class="tri"><use href="#i-tri"/></svg></span></div>
                    <label for="p-hist">История данных</label>
                    <div class="field"><select id="p-hist"><option>Использовать</option></select><span class="drop"><svg class="tri"><use href="#i-tri"/></svg></span></div>
                </div>
                <h3>Представление:</h3>
                <div class="group">
                    <label class="check-label" for="p-pass">Режим пароля</label>
                    <input id="p-pass" type="checkbox">
                    <label for="p-hint">Подсказка</label>
                    <textarea id="p-hint"></textarea>
                    <label for="p-mask">Маска</label>
                    <div class="field"><input id="p-mask" type="text"></div>
                    <label class="check-label" for="p-multi">Многострочный режим</label>
                    <input id="p-multi" type="checkbox">
                    <label class="check-label" for="p-ext">Расширенное редактирование</label>
                    <input id="p-ext" type="checkbox">
                </div>
                <hr>
                <div class="group">
                    <label for="p-check">Проверка заполнения</label>
                    <div class="field"><select id="p-check"><option>Не проверять</option></select><span class="drop"><svg class="tri"><use href="#i-tri"/></svg></span></div>
                </div>
                <hr>
                <div class="group">
                    <label for="p-quick">Быстрый выбор</label>
                    <div class="field"><select id="p-quick"><option>Авто</option></select><span class="drop"><svg class="tri"><use href="#i-tri"/></svg></span></div>
                    <label for="p-create">Создание при вводе</label>
                    <div class="field"><select id="p-create"><option>Авто</option></select><span class="drop"><svg class="tri"><use href="#i-tri"/></svg></span></div>
                    <label for="p-choice">История выбора при вводе</label>
                    <div class="field"><select id="p-choice"><option>Авто</option></select><span class="drop"><svg class="tri"><use href="#i-tri"/></svg></span></div>
                </div>
                <hr>
                <div class="group">
                    <label for="p-link">Связь по типу</label>
                    <div class="field">
                        <input id="p-link" type="text">
                        <button class="drop dots" aria-label="Выбрать">...</button>
                        <button class="drop" aria-label="Очистить"><svg class="x"><use href="#i-x"/></svg></button>
                    </div>
                </div>
            </form>
            <p class="prop-help">Имя объекта метаданных</p>
        </section>
    </main>

    <div class="taskbar">
        <button><svg class="icon"><use href="#i-doc"/></svg><span>Документ ЗаявкаНаПро...</span></button>
    </div>
    <footer class="statusbar">
        <p>Для получения подсказки нажмите F1</p>
        <span class="ind">CAP</span>
        <span class="ind">NUM</span>
        <button>ru <svg class="tri small"><use href="#i-tri"/></svg></button>
    </footer>
</body>
</html>
```
FILE: styles.css
```
* {
    box-sizing: border-box;
}
body {
    display: flex;
    flex-direction: column;
    min-height: 100vh;
    margin: 0;
    background-color: #f3f2dd;
    color: #3a3010;
    font-family: Roboto, "Liberation Sans", sans-serif;
    font-size: 14px;
    line-height: 22px;
}
h1, h2, h3, p, ul {
    margin: 0;
    padding: 0;
    font-size: 14px;
}
h2, h3 {
    font-family: "Liberation Sans", sans-serif;
}
ul {
    list-style: none;
}
button {
    display: flex;
    align-items: center;
    justify-content: center;
    padding: 0;
    border: none;
    background: none;
    color: inherit;
    font: inherit;
}
input, select, textarea {
    font: inherit;
    color: #000;
}
.sprite {
    position: absolute;
}
.icon {
    display: block;
    flex: none;
    width: 20px;
    height: 20px;
}
.tri {
    display: block;
    flex: none;
    width: 10px;
    height: 6px;
}
.tri.small {
    width: 7px;
    height: 4px;
}
.x {
    display: block;
    width: 10px;
    height: 10px;
}

/* Title bar */
.titlebar {
    display: flex;
    align-items: center;
    height: 29px;
    padding: 0 3px 0 2px;
    background-color: #0a7ad2;
    border-bottom: 1px solid #3c86bd;
    color: #fff;
}
.titlebar h1 {
    flex: 1;
    margin-left: 5px;
    font-family: "Open Sans", sans-serif;
    font-size: 15px;
    font-weight: normal;
}
.window-controls {
    display: flex;
}
.window-controls button {
    width: 58px;
    height: 28px;
}

/* Menu and toolbars */
.menubar {
    display: flex;
    align-items: center;
    height: 26px;
    padding-left: 3px;
}
.menu-item {
    padding: 0 5px;
    color: inherit;
    text-decoration: none;
}
.menu-item.hot {
    padding: 0 9px;
}
.grip {
    width: 4px;
    height: 16px;
    border-left: 3px dotted #c0bea4;
}
.toolbar {
    display: flex;
    align-items: center;
    gap: 7px;
}
.main-toolbar {
    height: 30px;
    padding-left: 3px;
}
.main-toolbar .grip {
    margin-right: -3px;
}
.sep {
    width: 1px;
    height: 20px;
    margin: 0 -1px;
    background-color: #cbc9ae;
}
.more {
    align-self: flex-end;
    padding-bottom: 5px;
}
.field {
    display: flex;
    height: 22px;
    min-width: 0;
    border: 1px solid #b3b193;
    border-radius: 2px;
    background-color: #fff;
}
.field input, .field select {
    flex: 1;
    width: 100%;
    min-width: 0;
    padding: 0 2px;
    border: none;
    background: none;
    outline: none;
    appearance: none;
}
.drop {
    display: flex;
    align-items: center;
    justify-content: center;
    flex: none;
    width: 18px;
    border-left: 1px solid #dedcc2;
    background-color: #f0efdc;
    color: #5d5520;
}
.find-box {
    width: 185px;
    margin: 0 -4px;
}

/* Panels */
.workspace {
    display: grid;
    flex: 1;
    grid-template-columns: 405px 1fr 518px;
    column-gap: 6px;
}
.panel {
    display: flex;
    flex-direction: column;
    min-width: 0;
}
.panel-title {
    display: flex;
    align-items: center;
    height: 20px;
    padding: 0 5px 0 4px;
    background-color: #cbc9c9;
    color: #303030;
}
.panel-title.inactive {
    margin-left: 1px;
    padding-left: 3px;
    background-color: #b1afb0;
    color: #6a6868;
}
.panel-title.inactive button {
    color: #4a4a4a;
}
.panel-title h2 {
    flex: 1;
}
.panel-title .x, .window-title .x {
    width: 12px;
    height: 12px;
}
.pin {
    width: 6px;
    height: 8px;
    margin-right: 12px;
}
.tree-toolbar, .prop-toolbar {
    height: 29px;
    padding-left: 4px;
}
.actions {
    gap: 3px;
    margin-right: -1px;
}
.search {
    height: 25px;
}
.search input::placeholder {
    color: #a3a3a3;
    opacity: 1;
}

/* Trees */
.tree {
    border: 1px solid #b3b193;
    background-color: #fff;
    color: #000;
}
.main-tree {
    flex: 1;
    margin-top: 1px;
}
.tree li {
    display: flex;
    align-items: center;
    height: 22px;
}
.tree span {
    margin-left: 6px;
    padding: 0 2px;
}
.l0 { padding-left: 4px; }
.l1 { padding-left: 8px; }
.l2 { padding-left: 31px; }
.l3 { padding-left: 54px; }
.l4 { padding-left: 77px; }
.l5 { padding-left: 100px; }
.leaf .icon {
    margin-left: 19px;
}
.exp {
    flex: none;
    width: 11px;
    height: 11px;
    margin-right: 8px;
    border: 1px solid #a9a9a9;
    border-radius: 50%;
    background: linear-gradient(#666, #666) center / 5px 1px no-repeat;
}
.exp.plus {
    background: linear-gradient(#666, #666) center / 5px 1px no-repeat, linear-gradient(#666, #666) center / 1px 5px no-repeat;
}
.selected {
    background-color: #7396ca;
    color: #fff;
}
.selected.focus {
    background-color: #5465b8;
}

/* MDI area */
.desktop {
    position: relative;
    margin-left: -1px;
    border-top: 2px solid #85846f;
    border-left: 2px solid #85846f;
    background-color: #d4d2bc;
}
.window {
    position: absolute;
    top: 0;
    left: 0;
    width: 615px;
    padding: 0 3px 3px;
    border-right: 1px solid #8c8c8c;
    border-bottom: 1px solid #8c8c8c;
    background-color: #cbc9c9;
}
.window-title {
    display: flex;
    align-items: center;
    gap: 10px;
    height: 25px;
    padding: 4px 4px 0 3px;
    color: #303030;
}
.window-title .icon {
    width: 16px;
    height: 18px;
    margin-right: -4px;
}
.window-title h2 {
    flex: 1;
}
.window-body {
    padding: 8px 5px 7px 7px;
    border: 1px solid #77776c;
    background-color: #fbfae9;
}
.editor {
    display: flex;
}
.tabs {
    width: 195px;
}
.tabs button {
    justify-content: flex-start;
    width: 194px;
    height: 26px;
    padding-left: 23px;
    border: 1px solid #cbc8ab;
    border-right: none;
    border-bottom-color: #e9e6ce;
    border-radius: 6px 0 0 4px;
    background-color: #e9e6ce;
}
.tabs button.active {
    position: relative;
    width: 196px;
    border-color: #b3b193;
    background-color: #fbfae9;
}
.tabs button.active::before {
    content: "";
    position: absolute;
    left: 10px;
    border: 6px solid transparent;
    border-left-color: #222;
    border-right: none;
}
.page {
    flex: 1;
    min-width: 0;
    padding: 0 11px 6px 25px;
    border: 1px solid #b3b193;
}
.page-toolbar {
    height: 38px;
    margin-bottom: 1px;
    padding-left: 3px;
}
.page-toolbar.second {
    margin-bottom: 8px;
}
.attrs {
    height: 197px;
}
.parts {
    height: 194px;
}
.splitter {
    height: 13px;
    background: linear-gradient(#fbfae9 4px, #f1efdc 8px, #fbfae9);
}
.btn {
    height: 25px;
    border: 1px solid #b3b193;
    border-radius: 3px;
    background: linear-gradient(#fdfcf0, #efedd8);
    color: #4f4316;
}
.page-buttons {
    display: grid;
    grid-template-columns: 175px 175px;
    gap: 7px;
    margin-top: 6px;
}
.page-buttons .btn {
    height: 27px;
    white-space: nowrap;
}
.window-buttons {
    display: flex;
    justify-content: flex-end;
    gap: 8px;
    margin-top: 9px;
}
.window-buttons .btn {
    width: 95px;
}
.window-buttons .with-menu {
    justify-content: space-between;
    padding: 0 5px;
}
.with-menu .tri {
    color: #a9a68c;
}

/* Properties */
.pressed {
    margin: 0 -3px;
    padding: 2px;
    border: 1px solid #b3b193;
    background-color: #e4e3cc;
}
.prop-search {
    height: 22px;
}
.props {
    flex: 1;
    margin-top: 1px;
    padding: 0 3px 0 9px;
    border-top: 1px solid #b3b193;
    background-color: #fff;
}
.props h3 {
    position: relative;
    height: 22px;
    margin-left: 2px;
    border-bottom: 1px solid #dddbcd;
    color: #554a14;
    line-height: 20px;
}
.props h3::before {
    content: "";
    position: absolute;
    top: 9px;
    left: -9px;
    border: 3px solid transparent;
    border-top: 4px solid #222;
    border-bottom: none;
}
.props hr {
    height: 1px;
    margin: 8px 0 7px 2px;
    border: none;
    background-color: #dddbcd;
}
.group {
    display: grid;
    grid-template-columns: auto 1fr;
}
.group label {
    height: 23px;
    padding: 0 4px 0 2px;
    white-space: nowrap;
}
.group label.current {
    height: 21px;
    margin-bottom: 2px;
    background-color: #5465b8;
    color: #fff;
    line-height: 20px;
}
.group label.check-label {
    height: 22px;
}
.editing input {
    flex: none;
    width: auto;
    padding-right: 0;
    field-sizing: content;
}
.caret {
    width: 1px;
    margin: 2px 0;
    background-color: #000;
}
.number {
    width: 65px;
}
.number input {
    text-align: right;
}
.spin {
    flex-direction: column;
    gap: 4px;
}
.up {
    transform: rotate(180deg);
}
.dots {
    align-items: flex-end;
    font-weight: bold;
}
.drop.hover {
    position: relative;
    background-color: #dde9f4;
}
.cursor {
    position: absolute;
    top: 12px;
    left: 5px;
    z-index: 2;
}
input[type="checkbox"] {
    width: 16px;
    height: 16px;
    margin: 2px 0;
    border: 1px solid #9b998a;
    border-radius: 3px;
    background-color: #fff;
    appearance: none;
}
.group textarea {
    height: 65px;
    margin-bottom: 2px;
    border: 1px solid #b3b193;
    border-radius: 2px;
    resize: none;
}
.prop-help {
    height: 63px;
    padding: 0 2px;
    border: 1px solid #b3b193;
    border-radius: 2px;
    background-color: #fbfae9;
    color: #000;
}

/* Bottom bars */
.taskbar {
    height: 27px;
    padding: 1px;
}
.taskbar button {
    justify-content: flex-start;
    gap: 2px;
    width: 193px;
    height: 24px;
    padding: 0 1px;
    background-color: #b1afb0;
}
.taskbar span {
    white-space: nowrap;
}
.statusbar {
    display: flex;
    align-items: center;
    gap: 5px;
    height: 23px;
    padding: 0 1px 0 4px;
    border-top: 1px solid #dcdac0;
    border-bottom: 2px solid #6a6858;
}
.statusbar p {
    flex: 1;
}
.ind {
    padding: 0 3px;
    border: 1px solid #e3e1cb;
    border-width: 0 1px;
    color: #a9a58a;
}
.statusbar button {
    gap: 3px;
    padding-left: 5px;
}
```
